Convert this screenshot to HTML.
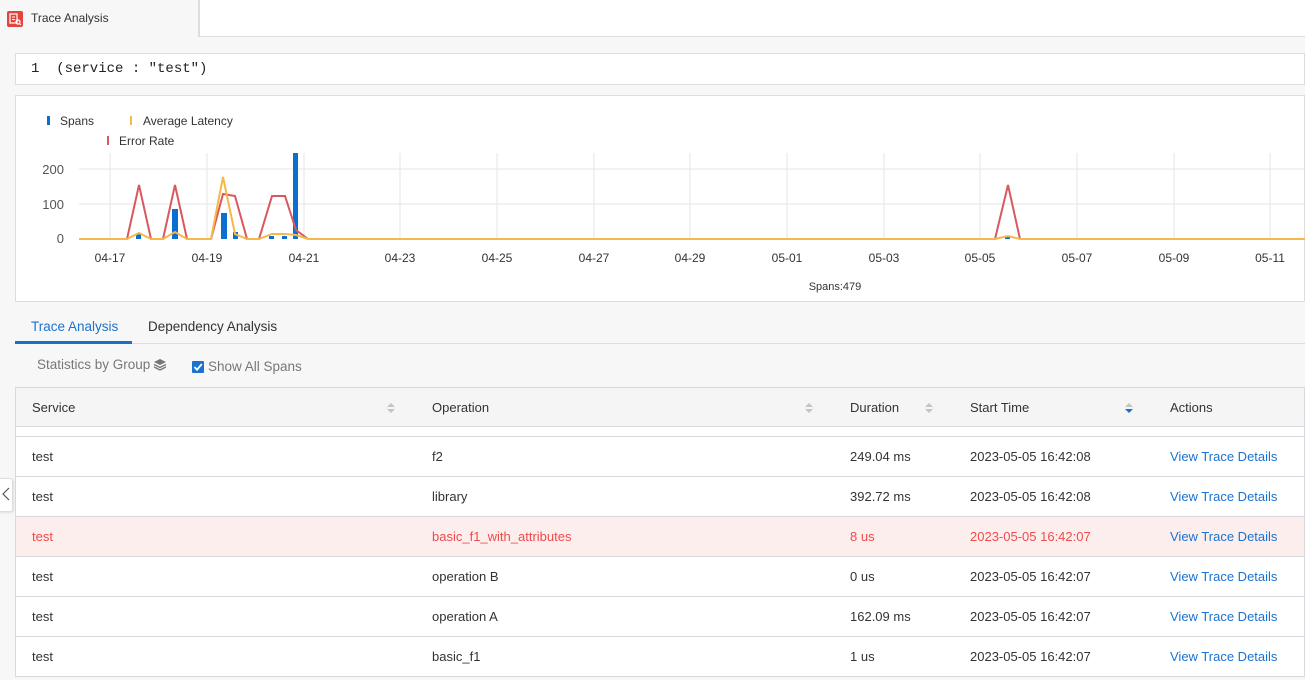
<!DOCTYPE html>
<html><head><meta charset="utf-8">
<style>
*{box-sizing:border-box;margin:0;padding:0}
body{width:1305px;height:680px;overflow:hidden;background:#f7f7f7;font-family:"Liberation Sans",sans-serif;font-size:13px;color:#333;position:relative}
.abs{position:absolute}
.tabtop{left:0;top:0;width:199px;height:37px;background:#f7f7f7;border-right:1px solid #ddd}
.topwhite{left:199px;top:0;width:1106px;height:37px;background:#fff;border-bottom:1px solid #ddd;border-left:1px solid #ddd}
.query{left:15px;top:53px;width:1290px;height:32px;background:#fff;border:1px solid #ddd;font-family:"Liberation Mono",monospace;font-size:14px;line-height:30px;padding-left:15px;color:#222}
.chart{left:15px;top:95px;width:1290px;height:207px;background:#fff;border:1px solid #ddd}
table{border-collapse:collapse}
.th{left:15px;top:387px;width:1290px;height:40px;background:#f5f5f5;border:1px solid #d8d8de}
.row{left:15px;width:1290px;height:40px;background:#fff;border:1px solid #d8d8de;border-top:none}
.c{position:absolute;top:0;line-height:39px;white-space:nowrap}
.lnk{color:#1a73d0}
.red{color:#f04b4b}
.sort{position:absolute;top:15px;width:8px;height:10px}
</style></head><body>
<div class="abs tabtop"></div>
<div class="abs topwhite"></div>
<svg class="abs" style="left:7px;top:11px" width="16" height="16" viewBox="0 0 16 16"><rect width="16" height="16" rx="2" fill="#e5443d"/><rect x="3" y="3" width="7" height="9" fill="none" stroke="#fff" stroke-width="1.2"/><line x1="5" y1="6" x2="8" y2="6" stroke="#fff"/><line x1="5" y1="8.5" x2="8" y2="8.5" stroke="#fff"/><circle cx="11" cy="11" r="2" fill="none" stroke="#fff" stroke-width="1.2"/><line x1="12.5" y1="12.5" x2="14" y2="14" stroke="#fff"/></svg>
<div class="abs" style="left:31px;top:11px;font-size:12px;color:#333">Trace Analysis</div>
<div class="abs query">1&nbsp;&nbsp;(service : "test")</div>
<div class="abs chart"></div>
<svg class="abs" style="left:0;top:95px" width="1305" height="207">
<g font-family="Liberation Sans" font-size="12" fill="#333">
<rect x="47" y="116" width="3" height="9" fill="#0b6fd0" transform="translate(0,-95)"/>
<text x="60" y="30">Spans</text>
<rect x="130" y="21" width="2" height="9" fill="#f5b84b"/>
<text x="143" y="30">Average Latency</text>
<rect x="107" y="41" width="2" height="9" fill="#d9585f"/>
<text x="119" y="50">Error Rate</text>
</g>
<g stroke="#e6e6e6" stroke-width="1">
<line x1="79" y1="74" x2="1305" y2="74"/><line x1="79" y1="109" x2="1305" y2="109"/>
<line x1="110" y1="58" x2="110" y2="144"/><line x1="207" y1="58" x2="207" y2="144"/><line x1="304" y1="58" x2="304" y2="144"/><line x1="400" y1="58" x2="400" y2="144"/><line x1="497" y1="58" x2="497" y2="144"/><line x1="594" y1="58" x2="594" y2="144"/><line x1="690" y1="58" x2="690" y2="144"/><line x1="787" y1="58" x2="787" y2="144"/><line x1="884" y1="58" x2="884" y2="144"/><line x1="980" y1="58" x2="980" y2="144"/><line x1="1077" y1="58" x2="1077" y2="144"/><line x1="1174" y1="58" x2="1174" y2="144"/><line x1="1270" y1="58" x2="1270" y2="144"/>
</g>
<g font-family="Liberation Sans" font-size="13" fill="#555" text-anchor="end">
<text x="64" y="79">200</text><text x="64" y="114">100</text><text x="64" y="148">0</text>
</g>
<g fill="#0b6fd0">
<rect x="136" y="139" width="5" height="5"/><rect x="172" y="114" width="6" height="30"/><rect x="221" y="118" width="6" height="26"/><rect x="233" y="137" width="5" height="7"/><rect x="269" y="141" width="5" height="3"/><rect x="282" y="141" width="5" height="3"/><rect x="293" y="58" width="5" height="86"/><rect x="1005" y="141" width="5" height="3"/>
</g>
<polyline fill="none" stroke="#d9585f" stroke-width="2" points="79,144 127,144 139,90 151,144 163,144 175,90 187,144 211,144 223,99 235,101 247,144 259,144 272,101 285,101 296,135 308,144 995,144 1008,90 1020,144"/>
<polyline fill="none" stroke="#f5b84b" stroke-width="2" points="79,144 127,144 139,138 151,144 163,144 175,137 187,144 211,144 223,82 235,139 247,144 259,144 272,139 285,139 296,140 308,144 995,144 1008,141 1020,144 1305,144"/>
<g font-family="Liberation Sans" font-size="12" fill="#333" text-anchor="middle">
<text x="110" y="167">04-17</text><text x="207" y="167">04-19</text><text x="304" y="167">04-21</text><text x="400" y="167">04-23</text><text x="497" y="167">04-25</text><text x="594" y="167">04-27</text><text x="690" y="167">04-29</text><text x="787" y="167">05-01</text><text x="884" y="167">05-03</text><text x="980" y="167">05-05</text><text x="1077" y="167">05-07</text><text x="1174" y="167">05-09</text><text x="1270" y="167">05-11</text>
<text x="835" y="195" font-size="11">Spans:479</text>
</g>
</svg>
<div class="abs" style="left:15px;top:343px;width:1290px;height:1px;background:#ddd"></div>
<div class="abs" style="left:31px;top:319px;font-size:13.5px;color:#1a73d0">Trace Analysis</div>
<div class="abs" style="left:15px;top:341px;width:117px;height:3px;background:#1a6fc8"></div>
<div class="abs" style="left:148px;top:319px;font-size:13.5px;color:#333">Dependency Analysis</div>
<div class="abs" style="left:37px;top:357px;font-size:13.5px;color:#777">Statistics by Group</div>
<svg class="abs" style="left:153px;top:358px" width="14" height="13" viewBox="0 0 14 13"><path d="M7 1L13 4 7 7 1 4Z" fill="#777"/><path d="M1 6.5L7 9.5 13 6.5M1 9L7 12 13 9" fill="none" stroke="#777" stroke-width="1.3"/></svg>
<div class="abs" style="left:192px;top:361px;width:12px;height:12px;background:#1a73d0;border-radius:1px"></div>
<svg class="abs" style="left:192px;top:361px" width="12" height="12"><path d="M2.5 6L5 8.8 9.8 3" fill="none" stroke="#fff" stroke-width="1.8"/></svg>
<div class="abs" style="left:208px;top:359px;font-size:13.5px;color:#777">Show All Spans</div>

<div class="abs th">
<div class="c" style="left:16px">Service</div>
<div class="c" style="left:416px">Operation</div>
<div class="c" style="left:834px">Duration</div>
<div class="c" style="left:954px">Start Time</div>
<div class="c" style="left:1154px">Actions</div>
<svg class="sort" style="left:371px" viewBox="0 0 8 10"><path d="M4 0L8 4H0ZM4 10L0 6H8Z" fill="#c4c4c4"/></svg>
<svg class="sort" style="left:789px" viewBox="0 0 8 10"><path d="M4 0L8 4H0ZM4 10L0 6H8Z" fill="#c4c4c4"/></svg>
<svg class="sort" style="left:909px" viewBox="0 0 8 10"><path d="M4 0L8 4H0ZM4 10L0 6H8Z" fill="#c4c4c4"/></svg>
<svg class="sort" style="left:1109px" viewBox="0 0 8 10"><path d="M4 0L8 4H0Z" fill="#c4c4c4"/><path d="M4 10L0 6H8Z" fill="#1a6fc8"/></svg>
</div>
<div class="abs" style="left:15px;top:427px;width:1290px;height:10px;background:#fff;border-left:1px solid #d8d8de;border-right:1px solid #d8d8de;border-bottom:1px solid #d8d8de"></div>

<div class="abs row" style="top:437px;border-top:none"><div class="c" style="left:16px">test</div><div class="c" style="left:416px">f2</div><div class="c" style="left:834px">249.04 ms</div><div class="c" style="left:954px">2023-05-05 16:42:08</div><div class="c lnk" style="left:1154px">View Trace Details</div></div>
<div class="abs row" style="top:477px"><div class="c" style="left:16px">test</div><div class="c" style="left:416px">library</div><div class="c" style="left:834px">392.72 ms</div><div class="c" style="left:954px">2023-05-05 16:42:08</div><div class="c lnk" style="left:1154px">View Trace Details</div></div>
<div class="abs row red" style="top:517px;background:#fdeeee"><div class="c" style="left:16px">test</div><div class="c" style="left:416px">basic_f1_with_attributes</div><div class="c" style="left:834px">8 us</div><div class="c" style="left:954px">2023-05-05 16:42:07</div><div class="c lnk" style="left:1154px">View Trace Details</div></div>
<div class="abs row" style="top:557px"><div class="c" style="left:16px">test</div><div class="c" style="left:416px">operation B</div><div class="c" style="left:834px">0 us</div><div class="c" style="left:954px">2023-05-05 16:42:07</div><div class="c lnk" style="left:1154px">View Trace Details</div></div>
<div class="abs row" style="top:597px"><div class="c" style="left:16px">test</div><div class="c" style="left:416px">operation A</div><div class="c" style="left:834px">162.09 ms</div><div class="c" style="left:954px">2023-05-05 16:42:07</div><div class="c lnk" style="left:1154px">View Trace Details</div></div>
<div class="abs row" style="top:637px"><div class="c" style="left:16px">test</div><div class="c" style="left:416px">basic_f1</div><div class="c" style="left:834px">1 us</div><div class="c" style="left:954px">2023-05-05 16:42:07</div><div class="c lnk" style="left:1154px">View Trace Details</div></div>

<div class="abs" style="left:-1px;top:478px;width:14px;height:34px;background:#fff;border:1px solid #ddd;border-radius:0 3px 3px 0;box-shadow:1px 1px 2px rgba(0,0,0,.1)"></div>
<svg class="abs" style="left:2px;top:487px" width="8" height="14"><path d="M7 1L1 7 7 13" fill="none" stroke="#555" stroke-width="1.2"/></svg>
</body></html>
